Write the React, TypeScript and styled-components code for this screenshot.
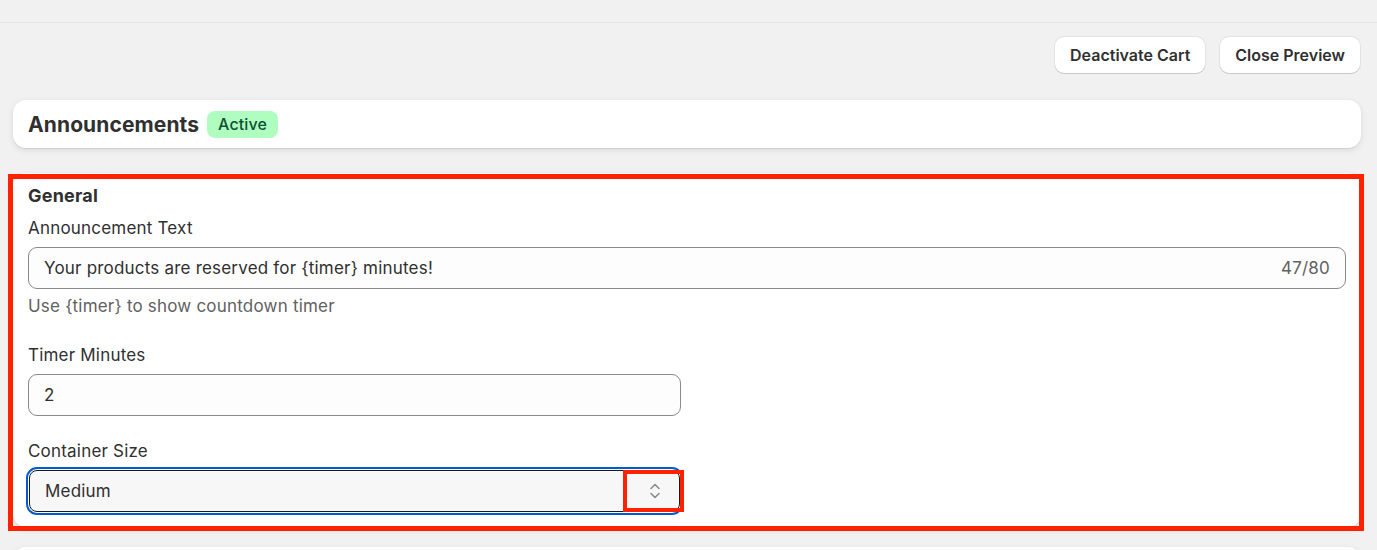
import styled, { createGlobalStyle } from 'styled-components';

const GlobalStyle = createGlobalStyle`
  html, body {
    margin: 0;
    padding: 0;
    background: #f1f1f1;
    font-family: Inter, "Noto Sans", sans-serif;
    color: #303030;
  }
  * {
    box-sizing: border-box;
  }
`;

const TopBar = styled.div`
  height: 23px;
  border-bottom: 1px solid #e6e6e6;
`;

const Page = styled.div`
  padding: 0 16px 0 13px;
`;

const Actions = styled.div`
  display: flex;
  justify-content: flex-end;
  gap: 15px;
  margin-top: 14px;
  margin-right: 1px;
`;

const Button = styled.button`
  height: 36px;
  padding: 0 15px;
  border: none;
  border-radius: 9px;
  background: #fff;
  font-family: inherit;
  font-size: 16px;
  font-weight: 600;
  color: #303030;
  box-shadow: 0 1px 0 0 #c9c9c9, 0 0 0 1px #e3e3e3;
`;

const Card = styled.section<{ $top: number }>`
  position: relative;
  margin-top: ${(p) => p.$top}px;
  background: #fff;
  border-radius: 13px;
  box-shadow: 0 2px 6px rgba(0, 0, 0, 0.1), 0 1px 0 rgba(0, 0, 0, 0.06);
`;

const HeaderRow = styled.div`
  display: flex;
  align-items: center;
  gap: 8px;
  height: 48px;
  padding: 0 15px;
`;

const Title = styled.h2`
  margin: 0;
  font-size: 21px;
  font-weight: 700;
  letter-spacing: 0.1px;
  color: #303030;
`;

const Badge = styled.span`
  display: inline-flex;
  align-items: center;
  height: 27px;
  padding: 0 11px;
  border-radius: 8px;
  background: #affebf;
  color: #0c5132;
  font-size: 16px;
  font-weight: 500;
  letter-spacing: 0.1px;
`;

const Body = styled.div`
  padding: 12px 15px 12px;
  display: flex;
  flex-direction: column;
  font-size: 17px;
  letter-spacing: 0.2px;
`;

const SectionTitle = styled.h3`
  margin: 0 0 11px;
  font-size: 18px;
  font-weight: 700;
  line-height: 22px;
`;

const Field = styled.div<{ $narrow?: boolean; $gap?: number }>`
  display: flex;
  flex-direction: column;
  width: ${(p) => (p.$narrow ? '653px' : '100%')};
  margin-bottom: ${(p) => p.$gap ?? 0}px;
`;

const Label = styled.label`
  line-height: 20px;
  margin-bottom: 9px;
`;

const InputBox = styled.div`
  display: flex;
  align-items: center;
  height: 42px;
  padding: 0 15px;
  border: 1px solid #8a8a8a;
  border-radius: 9px;
  background: #fdfdfd;
`;

const InputText = styled.span`
  flex: 1;
`;

const Counter = styled.span`
  color: #616161;
`;

const Help = styled.div`
  margin-top: 7px;
  line-height: 20px;
  color: #616161;
`;

const SelectRing = styled.div`
  position: relative;
  margin: -3px -2px 0;
  padding: 1px;
  border: 2px solid #005bd3;
  border-radius: 11px;
`;

const SelectBox = styled.div`
  display: flex;
  align-items: center;
  justify-content: space-between;
  height: 42px;
  padding: 0 17px 0 15px;
  border: 1px solid #1a1a1a;
  border-radius: 8px;
  background: #f7f7f7;
`;

const Highlight = styled.div<{ $inset: string; $w: number }>`
  position: absolute;
  inset: ${(p) => p.$inset};
  border: ${(p) => p.$w}px solid #ff2200;
  pointer-events: none;
`;

const Next = styled.div`
  margin-top: 20px;
  height: 20px;
  background: #fff;
  border-radius: 13px 13px 0 0;
  box-shadow: 0 2px 6px rgba(0, 0, 0, 0.1);
`;

const Chevrons = () => (
  <svg width="14" height="20" viewBox="0 0 14 20" fill="none" stroke="#8a8a8a" strokeWidth="1.6" strokeLinecap="round" strokeLinejoin="round">
    <path d="M3 7.5 L7 3.5 L11 7.5" />
    <path d="M3 12.5 L7 16.5 L11 12.5" />
  </svg>
);

export default function App() {
  return (
    <>
      <GlobalStyle />
      <TopBar />
      <Page>
        <Actions>
          <Button>Deactivate Cart</Button>
          <Button>Close Preview</Button>
        </Actions>
        <Card $top={27}>
          <HeaderRow>
            <Title>Announcements</Title>
            <Badge>Active</Badge>
          </HeaderRow>
        </Card>
        <Card $top={25}>
          <Body>
            <SectionTitle>General</SectionTitle>
            <Field $gap={29}>
              <Label>Announcement Text</Label>
              <InputBox>
                <InputText>Your products are reserved for {'{timer}'} minutes!</InputText>
                <Counter>47/80</Counter>
              </InputBox>
              <Help>Use {'{timer}'} to show countdown timer</Help>
            </Field>
            <Field $narrow $gap={25}>
              <Label>Timer Minutes</Label>
              <InputBox>
                <InputText>2</InputText>
              </InputBox>
            </Field>
            <Field $narrow>
              <Label>Container Size</Label>
              <SelectRing>
                <SelectBox>
                  <span>Medium</span>
                  <Chevrons />
                </SelectBox>
                <Highlight $inset="1px -3px 1px auto" $w={4} style={{ width: 61 }} />
              </SelectRing>
            </Field>
          </Body>
          <Highlight $inset="1px -3px -4px -5px" $w={5} />
        </Card>
        <Next />
      </Page>
    </>
  );
}
